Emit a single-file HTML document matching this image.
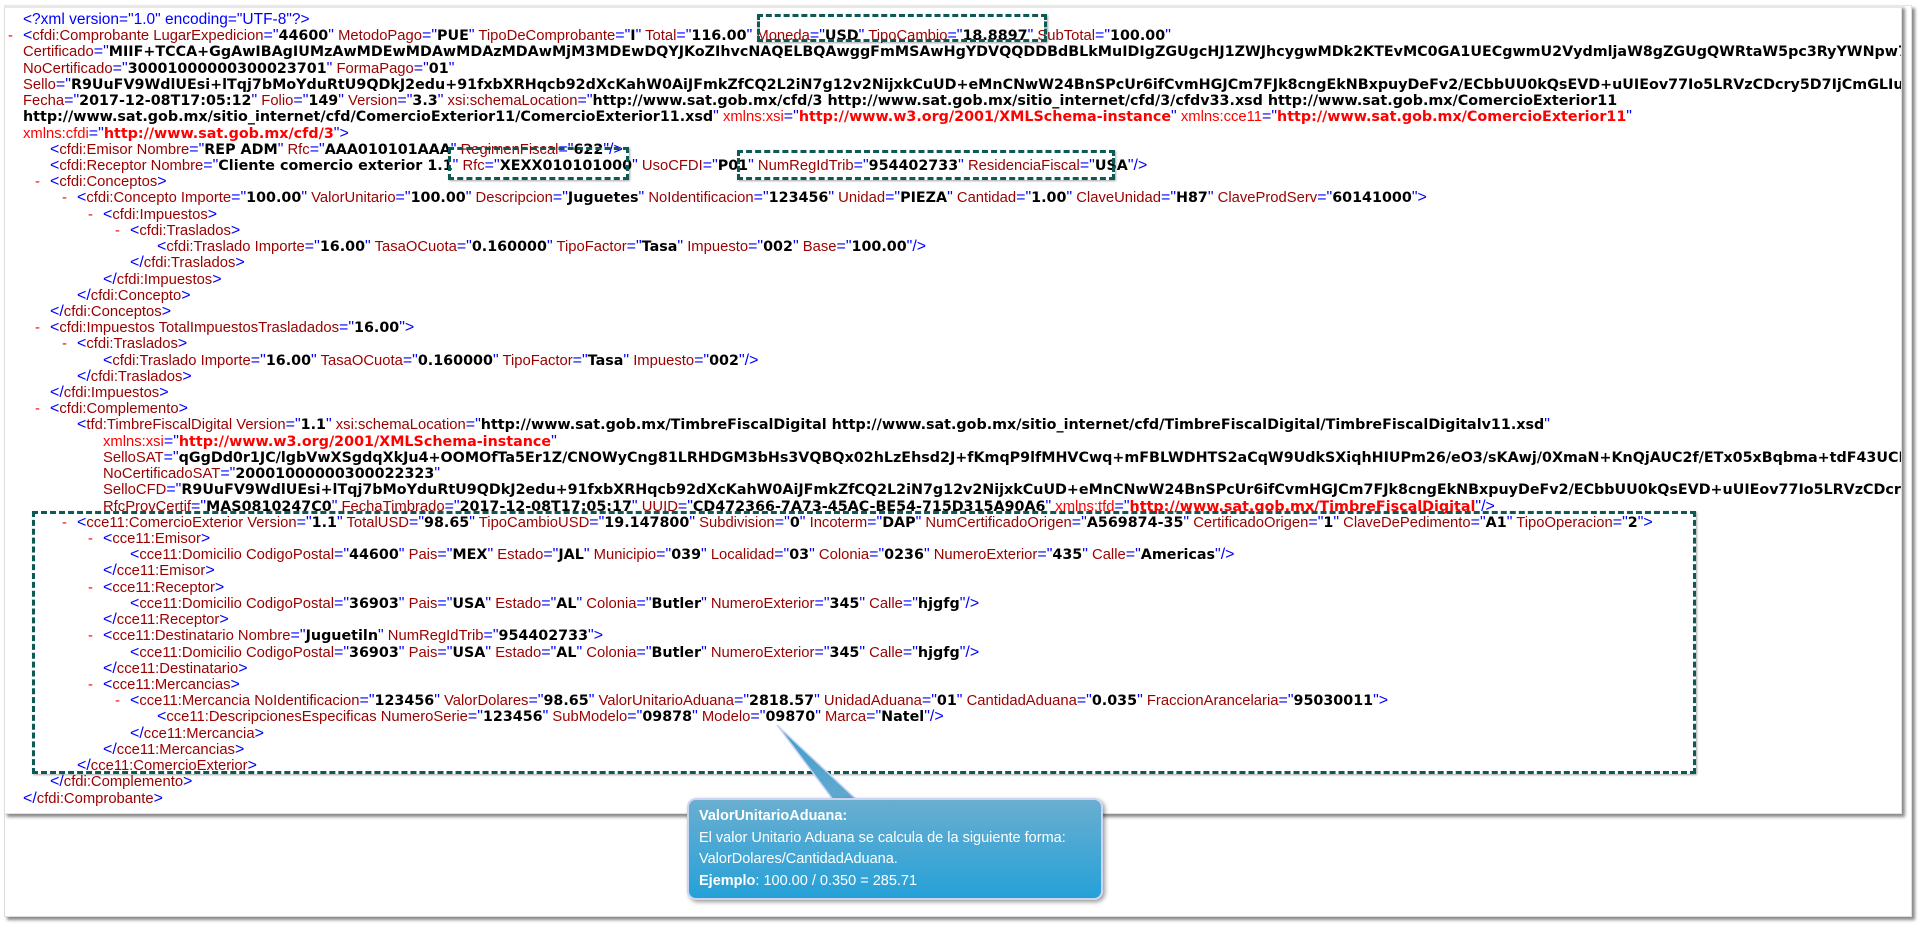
<!DOCTYPE html>
<html><head><meta charset="utf-8"><style>
html,body{margin:0;padding:0;width:1919px;height:925px;background:#fff;overflow:hidden;position:relative}
.outer{position:absolute;left:4px;top:5px;width:1906px;height:910px;border:1px solid #ddd;border-top-color:#e6e6e6;box-shadow:3px 3px 3px #8a8a8a;background:#fff}
.inner{position:absolute;left:4px;top:5px;width:1896px;height:805px;border:1px solid #e0e0e0;border-top:3px solid #e8e8e8;box-shadow:3px 3px 3px #8a8a8a;background:#fff;overflow:hidden}
.code{position:absolute;left:0;top:4px;font-family:"Liberation Sans",sans-serif;font-size:14.8px;color:#990000;line-height:16.23px;white-space:nowrap}
.l{position:relative;height:16.23px}
.l .d{position:absolute;color:#f00;margin-left:-15px}
i{font-style:normal;color:#0000ff;font-size:16px}
.x i{font-size:15.5px}
b{font-family:"DejaVu Sans",sans-serif;font-weight:bold;font-size:14.3px;color:#000}
s{text-decoration:none;color:#f00}
em{font-style:normal;font-family:"DejaVu Sans",sans-serif;font-weight:bold;font-size:14.3px;color:#f00}
.box{position:absolute;border:3px dashed #0d5a55;box-shadow:1px 1px 2px rgba(0,0,0,.35)}
.bub{position:absolute;left:687px;top:798px;width:416px;height:102px;border:2px solid #cdd4f2;border-radius:9px;background:linear-gradient(#6aaed0,#25a1d8);box-shadow:2px 2px 4px rgba(0,0,0,.4);color:#fff;font-family:"Liberation Sans",sans-serif;font-size:14.5px;line-height:21.5px;padding:6px 0 0 10px;box-sizing:border-box}
.bub strong{font-weight:bold}
</style></head><body>
<div class="outer"></div>
<div class="inner">
<div class="code">
<div class="l x" style="padding-left:18px"><i>&lt;?xml version="1.0" encoding="UTF-8"?&gt;</i></div>
<div class="l" style="padding-left:18px"><span class="d">-</span><i>&lt;</i>cfdi:Comprobante LugarExpedicion<i>="</i><b>44600</b><i>"</i> MetodoPago<i>="</i><b>PUE</b><i>"</i> TipoDeComprobante<i>="</i><b>I</b><i>"</i> Total<i>="</i><b>116.00</b><i>"</i> Moneda<i>="</i><b>USD</b><i>"</i> TipoCambio<i>="</i><b>18.8897</b><i>"</i> SubTotal<i>="</i><b>100.00</b><i>"</i></div>
<div class="l" style="padding-left:18px">Certificado<i>="</i><b>MIIF+TCCA+GgAwIBAgIUMzAwMDEwMDAwMDAzMDAwMjM3MDEwDQYJKoZIhvcNAQELBQAwggFmMSAwHgYDVQQDDBdBLkMuIDIgZGUgcHJ1ZWJhcygwMDk2KTEvMC0GA1UECgwmU2VydmljaW8gZGUgQWRtaW5pc3RyYWNpw7NuIFRyaWJ1dGFyaWExOEMwQQYDVQQLDDpBZG1p</b></div>
<div class="l" style="padding-left:18px">NoCertificado<i>="</i><b>30001000000300023701</b><i>"</i> FormaPago<i>="</i><b>01</b><i>"</i></div>
<div class="l" style="padding-left:18px">Sello<i>="</i><b>R9UuFV9WdlUEsi+lTqj7bMoYduRtU9QDkJ2edu+91fxbXRHqcb92dXcKahW0AiJFmkZfCQ2L2iN7g12v2NijxkCuUD+eMnCNwW24BnSPcUr6ifCvmHGJCm7FJk8cngEkNBxpuyDeFv2/ECbbUU0kQsEVD+uUIEov77Io5LRVzCDcry5D7IjCmGLIuZ/6ntxHvdvABC</b></div>
<div class="l" style="padding-left:18px">Fecha<i>="</i><b>2017-12-08T17:05:12</b><i>"</i> Folio<i>="</i><b>149</b><i>"</i> Version<i>="</i><b>3.3</b><i>"</i> xsi:schemaLocation<i>="</i><b>http://www.sat.gob.mx/cfd/3 http://www.sat.gob.mx/sitio_internet/cfd/3/cfdv33.xsd http://www.sat.gob.mx/ComercioExterior11</b></div>
<div class="l" style="padding-left:18px"><b>http://www.sat.gob.mx/sitio_internet/cfd/ComercioExterior11/ComercioExterior11.xsd</b><i>"</i> <s>xmlns:xsi</s><i>="</i><em>http://www.w3.org/2001/XMLSchema-instance</em><i>"</i> <s>xmlns:cce11</s><i>="</i><em>http://www.sat.gob.mx/ComercioExterior11</em><i>"</i></div>
<div class="l" style="padding-left:18px"><s>xmlns:cfdi</s><i>="</i><em>http://www.sat.gob.mx/cfd/3</em><i>"&gt;</i></div>
<div class="l" style="padding-left:45px"><i>&lt;</i>cfdi:Emisor Nombre<i>="</i><b>REP ADM</b><i>"</i> Rfc<i>="</i><b>AAA010101AAA</b><i>"</i> RegimenFiscal<i>="</i><b>622</b><i>"/&gt;</i></div>
<div class="l" style="padding-left:45px"><i>&lt;</i>cfdi:Receptor Nombre<i>="</i><b>Cliente comercio exterior 1.1</b><i>"</i> Rfc<i>="</i><b>XEXX010101000</b><i>"</i> UsoCFDI<i>="</i><b>P01</b><i>"</i> NumRegIdTrib<i>="</i><b>954402733</b><i>"</i> ResidenciaFiscal<i>="</i><b>USA</b><i>"/&gt;</i></div>
<div class="l" style="padding-left:45px"><span class="d">-</span><i>&lt;</i>cfdi:Conceptos<i>&gt;</i></div>
<div class="l" style="padding-left:72px"><span class="d">-</span><i>&lt;</i>cfdi:Concepto Importe<i>="</i><b>100.00</b><i>"</i> ValorUnitario<i>="</i><b>100.00</b><i>"</i> Descripcion<i>="</i><b>Juguetes</b><i>"</i> NoIdentificacion<i>="</i><b>123456</b><i>"</i> Unidad<i>="</i><b>PIEZA</b><i>"</i> Cantidad<i>="</i><b>1.00</b><i>"</i> ClaveUnidad<i>="</i><b>H87</b><i>"</i> ClaveProdServ<i>="</i><b>60141000</b><i>"&gt;</i></div>
<div class="l" style="padding-left:98px"><span class="d">-</span><i>&lt;</i>cfdi:Impuestos<i>&gt;</i></div>
<div class="l" style="padding-left:125px"><span class="d">-</span><i>&lt;</i>cfdi:Traslados<i>&gt;</i></div>
<div class="l" style="padding-left:152px"><i>&lt;</i>cfdi:Traslado Importe<i>="</i><b>16.00</b><i>"</i> TasaOCuota<i>="</i><b>0.160000</b><i>"</i> TipoFactor<i>="</i><b>Tasa</b><i>"</i> Impuesto<i>="</i><b>002</b><i>"</i> Base<i>="</i><b>100.00</b><i>"/&gt;</i></div>
<div class="l" style="padding-left:125px"><i>&lt;/</i>cfdi:Traslados<i>&gt;</i></div>
<div class="l" style="padding-left:98px"><i>&lt;/</i>cfdi:Impuestos<i>&gt;</i></div>
<div class="l" style="padding-left:72px"><i>&lt;/</i>cfdi:Concepto<i>&gt;</i></div>
<div class="l" style="padding-left:45px"><i>&lt;/</i>cfdi:Conceptos<i>&gt;</i></div>
<div class="l" style="padding-left:45px"><span class="d">-</span><i>&lt;</i>cfdi:Impuestos TotalImpuestosTrasladados<i>="</i><b>16.00</b><i>"&gt;</i></div>
<div class="l" style="padding-left:72px"><span class="d">-</span><i>&lt;</i>cfdi:Traslados<i>&gt;</i></div>
<div class="l" style="padding-left:98px"><i>&lt;</i>cfdi:Traslado Importe<i>="</i><b>16.00</b><i>"</i> TasaOCuota<i>="</i><b>0.160000</b><i>"</i> TipoFactor<i>="</i><b>Tasa</b><i>"</i> Impuesto<i>="</i><b>002</b><i>"/&gt;</i></div>
<div class="l" style="padding-left:72px"><i>&lt;/</i>cfdi:Traslados<i>&gt;</i></div>
<div class="l" style="padding-left:45px"><i>&lt;/</i>cfdi:Impuestos<i>&gt;</i></div>
<div class="l" style="padding-left:45px"><span class="d">-</span><i>&lt;</i>cfdi:Complemento<i>&gt;</i></div>
<div class="l" style="padding-left:72px"><i>&lt;</i>tfd:TimbreFiscalDigital Version<i>="</i><b>1.1</b><i>"</i> xsi:schemaLocation<i>="</i><b>http://www.sat.gob.mx/TimbreFiscalDigital http://www.sat.gob.mx/sitio_internet/cfd/TimbreFiscalDigital/TimbreFiscalDigitalv11.xsd</b><i>"</i></div>
<div class="l" style="padding-left:98px"><s>xmlns:xsi</s><i>="</i><em>http://www.w3.org/2001/XMLSchema-instance</em><i>"</i></div>
<div class="l" style="padding-left:98px">SelloSAT<i>="</i><b>qGgDd0r1JC/lgbVwXSgdqXkJu4+OOMOfTa5Er1Z/CNOWyCng81LRHDGM3bHs3VQBQx02hLzEhsd2J+fKmqP9lfMHVCwq+mFBLWDHTS2aCqW9UdkSXiqhHIUPm26/eO3/sKAwj/0XmaN+KnQjAUC2f/ETx05xBqbma+tdF43UCEKp65CS5</b></div>
<div class="l" style="padding-left:98px">NoCertificadoSAT<i>="</i><b>20001000000300022323</b><i>"</i></div>
<div class="l" style="padding-left:98px">SelloCFD<i>="</i><b>R9UuFV9WdlUEsi+lTqj7bMoYduRtU9QDkJ2edu+91fxbXRHqcb92dXcKahW0AiJFmkZfCQ2L2iN7g12v2NijxkCuUD+eMnCNwW24BnSPcUr6ifCvmHGJCm7FJk8cngEkNBxpuyDeFv2/ECbbUU0kQsEVD+uUIEov77Io5LRVzCDcry5D7IjCmGL</b></div>
<div class="l" style="padding-left:98px">RfcProvCertif<i>="</i><b>MAS0810247C0</b><i>"</i> FechaTimbrado<i>="</i><b>2017-12-08T17:05:17</b><i>"</i> UUID<i>="</i><b>CD472366-7A73-45AC-BE54-715D315A90A6</b><i>"</i> <s>xmlns:tfd</s><i>="</i><em>http://www.sat.gob.mx/TimbreFiscalDigital</em><i>"/&gt;</i></div>
<div class="l" style="padding-left:72px"><span class="d">-</span><i>&lt;</i>cce11:ComercioExterior Version<i>="</i><b>1.1</b><i>"</i> TotalUSD<i>="</i><b>98.65</b><i>"</i> TipoCambioUSD<i>="</i><b>19.147800</b><i>"</i> Subdivision<i>="</i><b>0</b><i>"</i> Incoterm<i>="</i><b>DAP</b><i>"</i> NumCertificadoOrigen<i>="</i><b>A569874-35</b><i>"</i> CertificadoOrigen<i>="</i><b>1</b><i>"</i> ClaveDePedimento<i>="</i><b>A1</b><i>"</i> TipoOperacion<i>="</i><b>2</b><i>"&gt;</i></div>
<div class="l" style="padding-left:98px"><span class="d">-</span><i>&lt;</i>cce11:Emisor<i>&gt;</i></div>
<div class="l" style="padding-left:125px"><i>&lt;</i>cce11:Domicilio CodigoPostal<i>="</i><b>44600</b><i>"</i> Pais<i>="</i><b>MEX</b><i>"</i> Estado<i>="</i><b>JAL</b><i>"</i> Municipio<i>="</i><b>039</b><i>"</i> Localidad<i>="</i><b>03</b><i>"</i> Colonia<i>="</i><b>0236</b><i>"</i> NumeroExterior<i>="</i><b>435</b><i>"</i> Calle<i>="</i><b>Americas</b><i>"/&gt;</i></div>
<div class="l" style="padding-left:98px"><i>&lt;/</i>cce11:Emisor<i>&gt;</i></div>
<div class="l" style="padding-left:98px"><span class="d">-</span><i>&lt;</i>cce11:Receptor<i>&gt;</i></div>
<div class="l" style="padding-left:125px"><i>&lt;</i>cce11:Domicilio CodigoPostal<i>="</i><b>36903</b><i>"</i> Pais<i>="</i><b>USA</b><i>"</i> Estado<i>="</i><b>AL</b><i>"</i> Colonia<i>="</i><b>Butler</b><i>"</i> NumeroExterior<i>="</i><b>345</b><i>"</i> Calle<i>="</i><b>hjgfg</b><i>"/&gt;</i></div>
<div class="l" style="padding-left:98px"><i>&lt;/</i>cce11:Receptor<i>&gt;</i></div>
<div class="l" style="padding-left:98px"><span class="d">-</span><i>&lt;</i>cce11:Destinatario Nombre<i>="</i><b>Juguetiln</b><i>"</i> NumRegIdTrib<i>="</i><b>954402733</b><i>"&gt;</i></div>
<div class="l" style="padding-left:125px"><i>&lt;</i>cce11:Domicilio CodigoPostal<i>="</i><b>36903</b><i>"</i> Pais<i>="</i><b>USA</b><i>"</i> Estado<i>="</i><b>AL</b><i>"</i> Colonia<i>="</i><b>Butler</b><i>"</i> NumeroExterior<i>="</i><b>345</b><i>"</i> Calle<i>="</i><b>hjgfg</b><i>"/&gt;</i></div>
<div class="l" style="padding-left:98px"><i>&lt;/</i>cce11:Destinatario<i>&gt;</i></div>
<div class="l" style="padding-left:98px"><span class="d">-</span><i>&lt;</i>cce11:Mercancias<i>&gt;</i></div>
<div class="l" style="padding-left:125px"><span class="d">-</span><i>&lt;</i>cce11:Mercancia NoIdentificacion<i>="</i><b>123456</b><i>"</i> ValorDolares<i>="</i><b>98.65</b><i>"</i> ValorUnitarioAduana<i>="</i><b>2818.57</b><i>"</i> UnidadAduana<i>="</i><b>01</b><i>"</i> CantidadAduana<i>="</i><b>0.035</b><i>"</i> FraccionArancelaria<i>="</i><b>95030011</b><i>"&gt;</i></div>
<div class="l" style="padding-left:152px"><i>&lt;</i>cce11:DescripcionesEspecificas NumeroSerie<i>="</i><b>123456</b><i>"</i> SubModelo<i>="</i><b>09878</b><i>"</i> Modelo<i>="</i><b>09870</b><i>"</i> Marca<i>="</i><b>Natel</b><i>"/&gt;</i></div>
<div class="l" style="padding-left:125px"><i>&lt;/</i>cce11:Mercancia<i>&gt;</i></div>
<div class="l" style="padding-left:98px"><i>&lt;/</i>cce11:Mercancias<i>&gt;</i></div>
<div class="l" style="padding-left:72px"><i>&lt;/</i>cce11:ComercioExterior<i>&gt;</i></div>
<div class="l" style="padding-left:45px"><i>&lt;/</i>cfdi:Complemento<i>&gt;</i></div>
<div class="l" style="padding-left:18px"><i>&lt;/</i>cfdi:Comprobante<i>&gt;</i></div>
</div>
</div>
<div class="box" style="left:757px;top:14px;width:284px;height:22px"></div>
<div class="box" style="left:448px;top:147px;width:175px;height:27px"></div>
<div class="box" style="left:737px;top:150px;width:372px;height:24px"></div>
<div class="box" style="left:32px;top:511px;width:1658px;height:257px"></div>
<svg style="position:absolute;left:0;top:0" width="1919" height="925">
<defs><linearGradient id="g" x1="0" y1="0" x2="0" y2="1"><stop offset="0" stop-color="#3e9ccc"/><stop offset="1" stop-color="#62aad0"/></linearGradient></defs>
<polygon points="777,725 834,801 858,801" fill="url(#g)" stroke="#cdd4f2" stroke-width="1.5"/>
</svg>
<div class="bub"><strong>ValorUnitarioAduana:</strong><br>El valor Unitario Aduana se calcula de la siguiente forma:<br>ValorDolares/CantidadAduana.<br><strong>Ejemplo</strong>: 100.00 / 0.350 = 285.71</div>
</body></html>
